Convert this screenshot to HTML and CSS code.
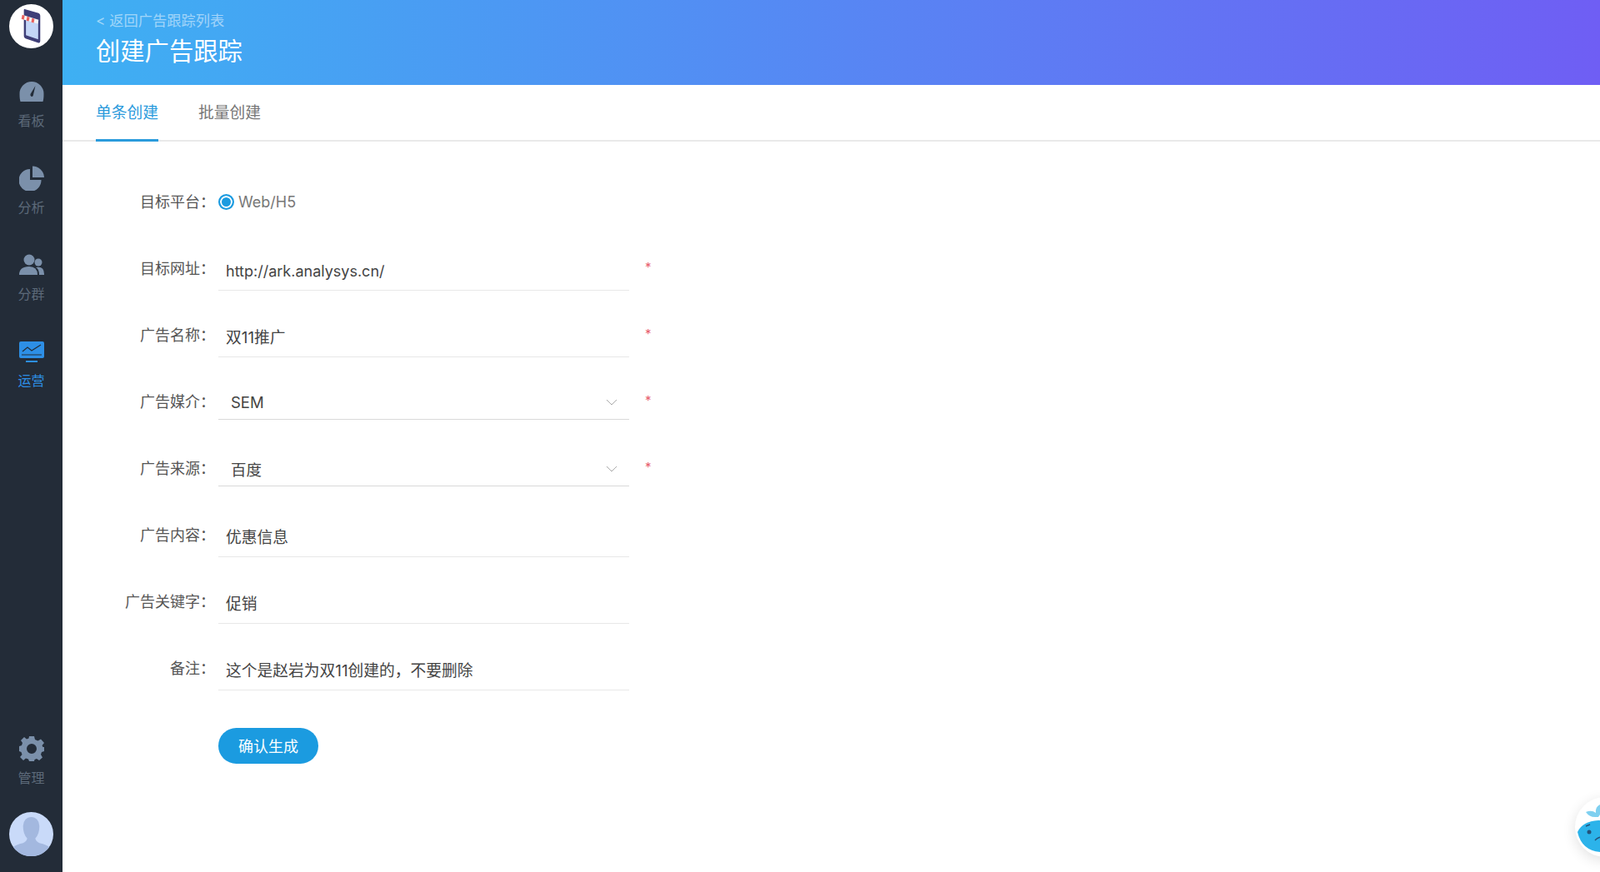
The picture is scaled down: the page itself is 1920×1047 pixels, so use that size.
FILE: index.html
```html
<!DOCTYPE html>
<html lang="zh-CN">
<head>
    <meta charset="UTF-8">
    <title>创建广告跟踪</title>
    <link rel="stylesheet" href="styles.css">
</head>
<body>
    <aside class="sidebar">
        <div class="logo">
            <svg width="53" height="53" viewBox="0 0 54 54">
                <circle cx="27" cy="27" r="27" fill="#fff"/>
                <path d="M19 6 L36 11 Q38 12 38 14 V45 Q38 48 35 47 L20 42 Q18 41 18 39 V8 Q18 5 19 6 Z" fill="#3f3f78"/>
                <path d="M20.500 17 L35.500 21 V43 L20.500 38 Z" fill="#c4d6f7"/>
                <path d="M16 13 L36 19 L35 24 L15 18 Z" fill="#f4f4f4"/>
                <path d="M16 13 L19 14 L18 19 L15 18 Z M22 15 L25 16 L24 21 L21 20 Z M28 17 L31 18 L30 23 L27 22 Z" fill="#e9615f"/>
            </svg>
        </div>
        <nav class="nav-top">
            <a class="nav-item">
                <svg class="nav-icon" viewBox="0 0 30 30">
                    <path d="M1.500 27 Q0.500 24 0.500 17.500 A14.500 14.500 0 0 1 29.500 17.500 Q29.500 24 28.500 27 Z" fill="#7b90aa"/>
                    <path d="M14.800 21 Q12.800 20 13.500 18 L19.500 8 L16.800 19.500 Q16.200 21.200 14.800 21 Z" fill="#232c38"/>
                </svg>
                <span class="nav-label">看板</span>
            </a>
            <a class="nav-item">
                <svg class="nav-icon" viewBox="0 0 30 30">
                    <path d="M13 4 V17 H26.500 A13.500 13.500 0 1 1 13 4 Z" fill="#7b90aa"/>
                    <path d="M16 0.500 A14 14 0 0 1 30 14 H16 Z" fill="#7b90aa"/>
                </svg>
                <span class="nav-label">分析</span>
            </a>
            <a class="nav-item">
                <svg class="nav-icon" viewBox="0 0 30 30">
                    <circle cx="12" cy="9" r="6.500" fill="#7b90aa"/>
                    <circle cx="23" cy="12" r="4.500" fill="#7b90aa"/>
                    <path d="M0 27 Q0 17 12 17 Q22 17 22 27 Z" fill="#7b90aa"/>
                    <path d="M24 27 Q24 20 20 18 Q30 16 30 26 V27 Z" fill="#7b90aa"/>
                </svg>
                <span class="nav-label">分群</span>
            </a>
            <a class="nav-item active">
                <svg class="nav-icon" viewBox="0 0 30 30">
                    <rect x="0" y="3" width="30" height="20" rx="2" fill="#2d8fe6"/>
                    <path d="M4 15 L10 10 L15 14 L26 7" fill="none" stroke="#232c38" stroke-width="1.200"/>
                    <path d="M3 19 H27" stroke="#232c38" stroke-width="1"/>
                    <path d="M8 26 H22 V28 H8 Z" fill="#2d8fe6"/>
                </svg>
                <span class="nav-label">运营</span>
            </a>
        </nav>
        <div class="nav-bottom">
            <a class="nav-item">
                <svg class="nav-icon" viewBox="0 0 30 30">
                    <path fill="#7b90aa" fill-rule="evenodd" d="M12 0 H18 L19 4 L22.500 5.500 L26 3.500 L30 8 L27.500 11 L28.500 13 L30 13 V18 L27 19 L26 22 L28 25.500 L24 29 L21 27 L18.500 28 L18 30 H12 L11 27.500 L8 26.500 L5 29 L1 25 L3.500 22 L2.500 19 L0 18 V12 L3 11 L4 8 L2 5 L6 1 L9 3.500 L11.500 2.500 Z M15 9 A6 6 0 1 0 15 21 A6 6 0 1 0 15 9 Z"/>
                </svg>
                <span class="nav-label">管理</span>
            </a>
            <div class="avatar">
                <svg width="53" height="53" viewBox="0 0 54 54">
                    <circle cx="27" cy="27" r="27" fill="#c9daf9"/>
                    <path d="M17 17 A10 11 0 0 1 37 17 Q37 27 32 32 Q32 35 37 38 Q46 40 49 43 A27 27 0 0 1 5 43 Q8 40 17 38 Q22 35 22 32 Q17 27 17 17 Z" fill="#a3b8df"/>
                </svg>
            </div>
        </div>
    </aside>

    <main class="main">
        <header class="page-header">
            <a class="back-link">&lt; 返回广告跟踪列表</a>
            <h1>创建广告跟踪</h1>
        </header>

        <div class="tabs">
            <a class="tab active">单条创建</a>
            <a class="tab">批量创建</a>
        </div>

        <form class="track-form">
            <div class="form-row">
                <label>目标平台：</label>
                <div class="radio-group">
                    <span class="radio"></span>
                    <span>Web/H5</span>
                </div>
            </div>
            <div class="form-row">
                <label>目标网址：</label>
                <input class="field field-url" type="text" value="http://ark.analysys.cn/">
                <span class="required">*</span>
            </div>
            <div class="form-row">
                <label>广告名称：</label>
                <input class="field" type="text" value="双11推广">
                <span class="required">*</span>
            </div>
            <div class="form-row">
                <label>广告媒介：</label>
                <div class="select">
                    <span>SEM</span>
                    <svg width="14" height="8" viewBox="0 0 14 8"><path d="M1 1 L7 7 L13 1" fill="none" stroke="#aaa" stroke-width="1"/></svg>
                </div>
                <span class="required">*</span>
            </div>
            <div class="form-row">
                <label>广告来源：</label>
                <div class="select">
                    <span>百度</span>
                    <svg width="14" height="8" viewBox="0 0 14 8"><path d="M1 1 L7 7 L13 1" fill="none" stroke="#aaa" stroke-width="1"/></svg>
                </div>
                <span class="required">*</span>
            </div>
            <div class="form-row">
                <label>广告内容：</label>
                <input class="field" type="text" value="优惠信息">
            </div>
            <div class="form-row">
                <label>广告关键字：</label>
                <input class="field" type="text" value="促销">
            </div>
            <div class="form-row">
                <label>备注：</label>
                <input class="field" type="text" value="这个是赵岩为双11创建的，不要删除">
            </div>
            <button class="submit-btn" type="button">确认生成</button>
        </form>
    </main>

    <div class="helper">
        <svg width="72" height="72" viewBox="0 0 72 72">
            <path d="M24 24 Q17 24 13 18 Q20 15 25 19 Q24 12 30 9 Q35 15 28 24 Z" fill="#7fd0f0"/>
            <path d="M3 42 Q9 29 28 28 Q50 28 72 36 V66 H30 Q8 64 3 42 Z" fill="#2cb3ea"/>
            <circle cx="17" cy="42" r="2.500" fill="#24527a"/>
            <path d="M13 35 L18 33" stroke="#24527a" stroke-width="1.500"/>
            <path d="M24 52 Q28 48 32 48" fill="none" stroke="#24527a" stroke-width="1.500"/>
        </svg>
    </div>
</body>
</html>
```

FILE: styles.css
```css
* {
    box-sizing: border-box;
}
html, body {
    height: 100%;
}
body {
    margin: 0;
    display: flex;
    overflow: hidden;
    background-color: #fff;
    font-family: Inter, "Noto Sans CJK SC", sans-serif;
    color: #555;
}

/* Sidebar */
.sidebar {
    width: 75px;
    flex: none;
    display: flex;
    flex-direction: column;
    justify-content: space-between;
    background-color: #232c38;
    padding-bottom: 18px;
}
.logo {
    height: 54px;
    margin: 5px 0 26px 11px;
}
.nav-item {
    display: flex;
    flex-direction: column;
    align-items: center;
    height: 104px;
    padding-top: 10px;
}
.nav-icon {
    width: 30px;
    height: 30px;
    flex: none;
}
.nav-label {
    margin-top: 10px;
    font-size: 16px;
    line-height: 20px;
    color: #5c6978;
}
.nav-item.active .nav-label {
    color: #2d8fe6;
}
.nav-top {
    flex: 1;
}
.nav-bottom .nav-item {
    height: auto;
    padding-top: 0;
}
.avatar {
    height: 54px;
    margin: 31px 0 0 11px;
}

/* Main */
.main {
    flex: 1;
    min-width: 0;
}
.page-header {
    height: 102px;
    padding: 13px 40px 0;
    background: linear-gradient(90deg, #3eb0f3 0%, #6f5ef4 100%);
    color: #fff;
}
.back-link {
    display: block;
    font-size: 17.250px;
    line-height: 24px;
    color: rgba(255, 255, 255, 0.5);
}
.page-header h1 {
    margin: 7px 0 0;
    font-size: 29.300px;
    line-height: 36px;
    font-weight: normal;
}
.tabs {
    display: flex;
    gap: 48px;
    height: 68px;
    padding-left: 40px;
    border-bottom: 2px solid #e9e9e9;
}
.tab {
    height: 68px;
    font-size: 18.750px;
    line-height: 67px;
    color: #777;
}
.tab.active {
    color: #2b9bdc;
    border-bottom: 3px solid #2b9bdc;
}

/* Form */
.track-form {
    padding-top: 50px;
    padding-left: 187px;
}
.form-row {
    display: flex;
    height: 80px;
    margin-left: -187px;
}
.form-row label {
    width: 187px;
    padding-right: 4px;
    flex: none;
    text-align: right;
    font-size: 18px;
    line-height: 46px;
    color: #555;
}
.radio-group {
    display: flex;
    align-items: center;
    gap: 5px;
    height: 44px;
    font-size: 18px;
    color: #777;
}
.radio {
    width: 19px;
    height: 19px;
    border: 2px solid #1b9be0;
    border-radius: 50%;
    background-color: #1b9be0;
    box-shadow: inset 0 0 0 2px #fff;
}
.field {
    width: 493px;
    height: 49px;
    padding: 0 9px 2px;
    border: none;
    border-bottom: 1px solid #e8e8e8;
    outline: none;
    font-family: inherit;
    font-size: 18.750px;
    line-height: 26px;
    color: #444;
}
.field-url {
    padding: 2px 9px 0;
    font-size: 18px;
}
.select {
    display: flex;
    align-items: center;
    justify-content: space-between;
    width: 493px;
    height: 44px;
    padding: 2px 14px 0 15px;
    border-bottom: 1px solid #d9d9d9;
    font-size: 18.500px;
    color: #444;
}
.required {
    margin-left: 19px;
    font-size: 15px;
    line-height: 42px;
    color: #e8606e;
}
.submit-btn {
    display: block;
    width: 120px;
    height: 43px;
    margin-top: 14px;
    padding-bottom: 2px;
    border: none;
    border-radius: 22px;
    background-color: #1b9be0;
    color: #fff;
    font-family: inherit;
    font-size: 18px;
    cursor: pointer;
}

/* Floating helper */
.helper {
    position: fixed;
    left: 1890px;
    top: 957px;
    width: 72px;
    height: 72px;
    border-radius: 50%;
    overflow: hidden;
    background-color: #fff;
    box-shadow: 0 4px 16px rgba(0, 0, 0, 0.12);
}
```
